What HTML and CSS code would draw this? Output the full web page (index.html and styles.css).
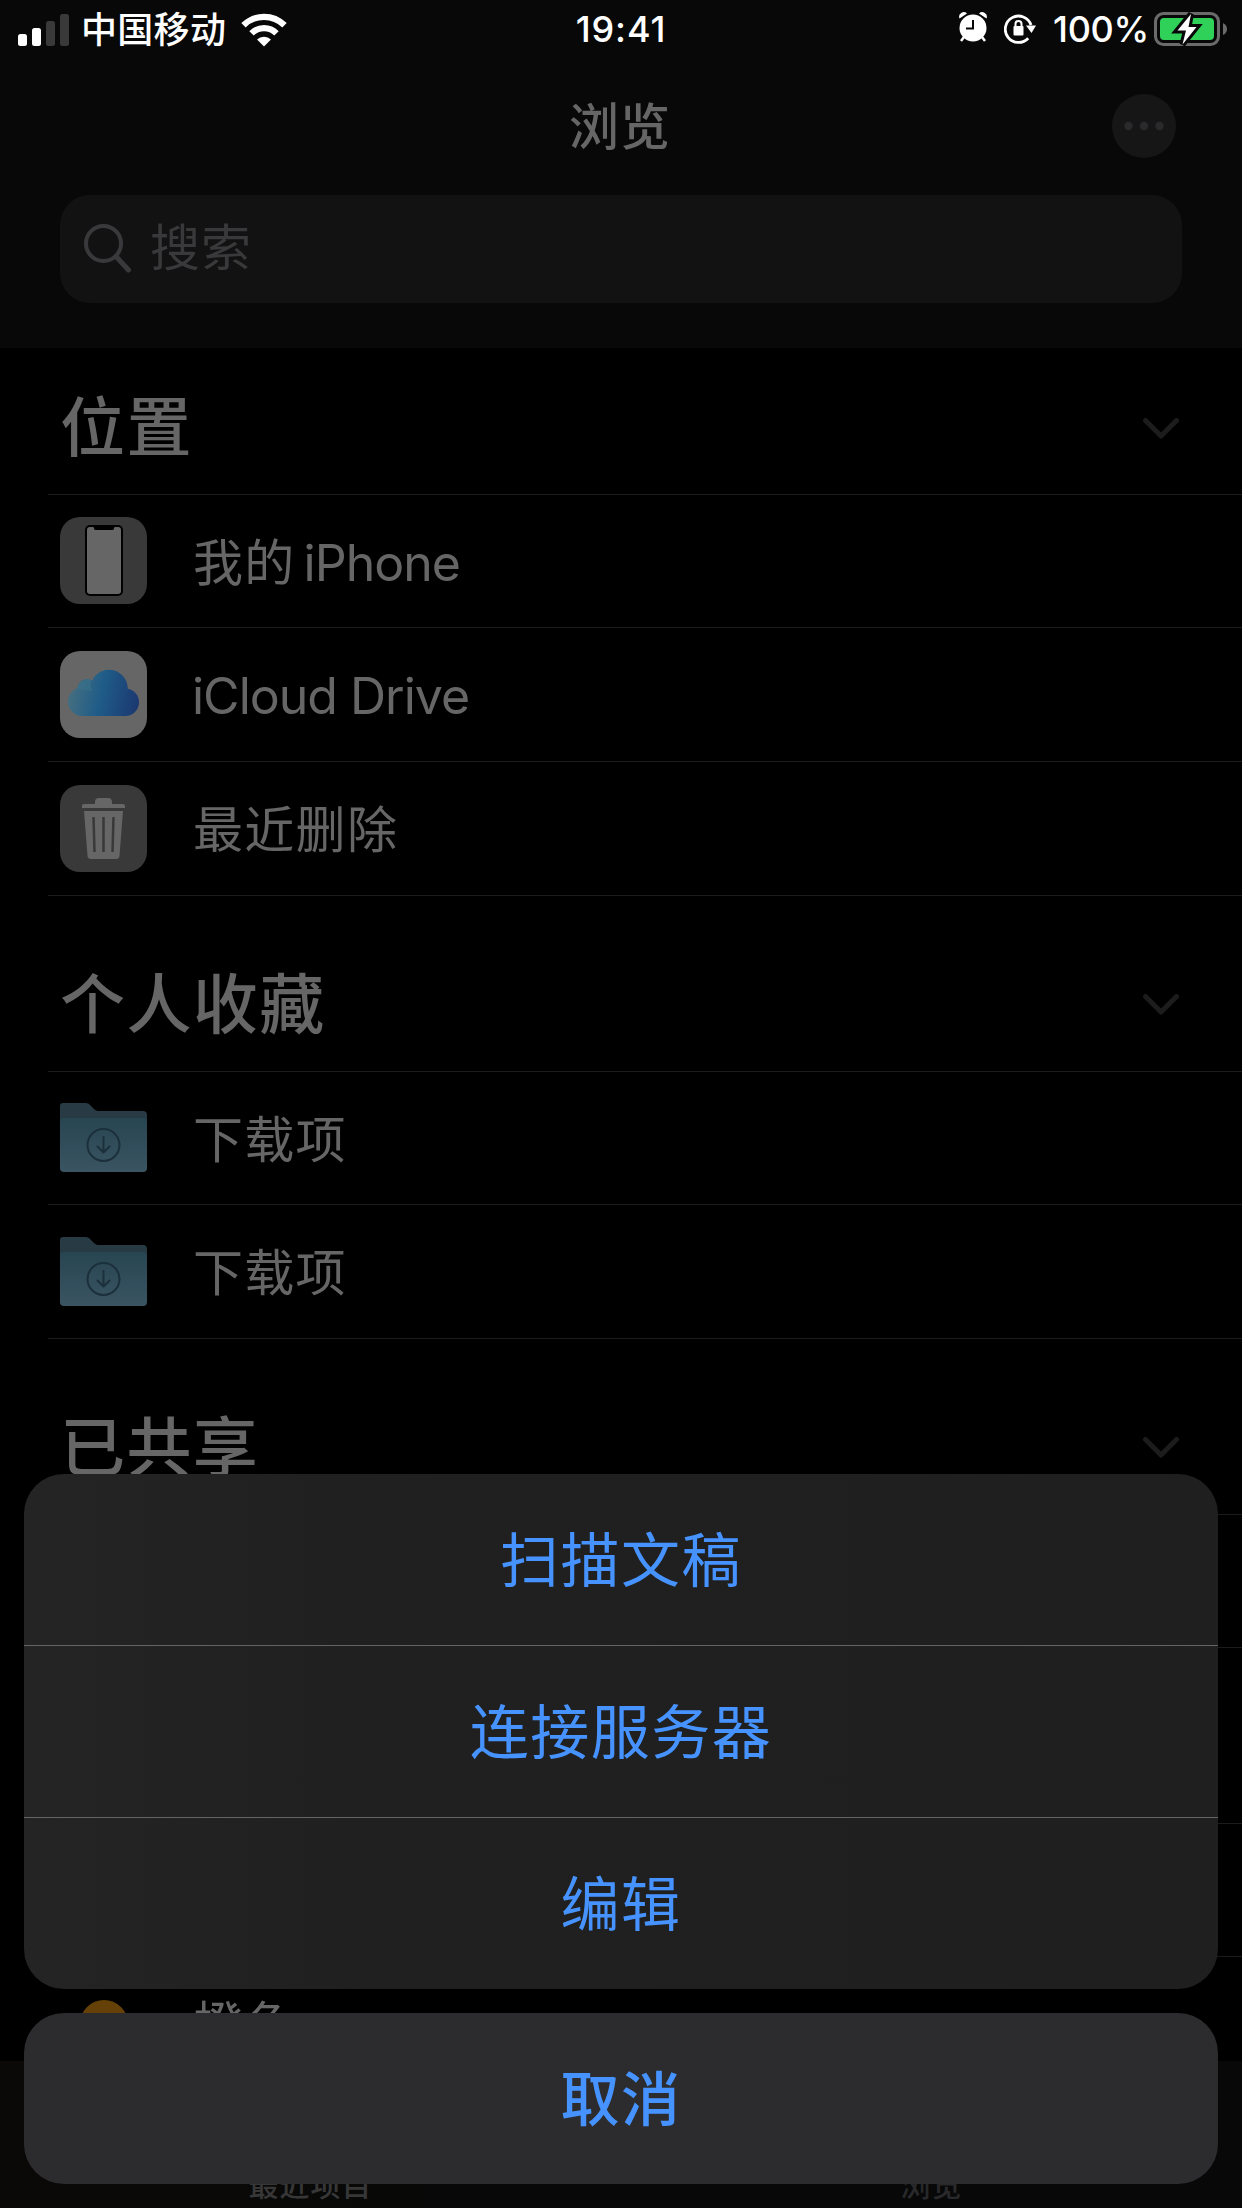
FILE: index.html
```html
<!DOCTYPE html>
<html lang="zh-CN">
<head>
<meta charset="utf-8">
<title>浏览</title>
<link rel="stylesheet" href="styles.css">
</head>
<body>
<svg class="defs" aria-hidden="true">
  <defs>
    <linearGradient id="cloudMain" gradientUnits="userSpaceOnUse" x1="8" y1="42" x2="79" y2="56"><stop offset="0" stop-color="#466f80"/><stop offset="0.45" stop-color="#1f5c88"/><stop offset="1" stop-color="#1b376f"/></linearGradient>
    <linearGradient id="folderFront" x1="0" y1="0" x2="0" y2="1"><stop offset="0" stop-color="#284552"/><stop offset="1" stop-color="#3a5462"/></linearGradient>
    <symbol id="chevron" viewBox="0 0 36 21"><path d="M2.500 2.500 18 18 33.500 2.500" fill="none" stroke="currentColor" stroke-width="5" stroke-linecap="round" stroke-linejoin="round"/></symbol>
    <symbol id="folder" viewBox="0 0 87 69">
      <path d="M0 20V3a3 3 0 0 1 3-3h23q3 0 5 3l3 3q2 2 4 2h45a4 4 0 0 1 4 4V20z" fill="#283a43"/>
      <rect y="15" width="87" height="54" rx="4" fill="url(#folderFront)"/>
      <g fill="none" stroke="#1b303a" stroke-width="2"><circle cx="43.500" cy="42" r="16"/><path d="M43.500 34v15M37.500 43.500l6 6 6-6" stroke-linejoin="round" stroke-linecap="round"/></g>
    </symbol>
  </defs>
</svg>
<div class="screen">
  <header class="top">
    <div class="status">
      <div class="status-left">
        <svg class="signal" viewBox="0 0 51 32" fill="#fff"><rect y="20" width="9" height="12" rx="2.500"/><rect x="14" y="14" width="9" height="18" rx="2.500"/><g fill="#393939"><rect x="28" y="7" width="9" height="25" rx="2.500"/><rect x="42" width="9" height="32" rx="2.500"/></g></svg>
        <span class="carrier">中国移动</span>
        <svg class="wifi" viewBox="0 0 46 34"><g fill="none" stroke="#fff" stroke-width="6.200"><path d="M2.500 12.300a29 29 0 0 1 41 0"/><path d="M10.500 20.300a17.500 17.500 0 0 1 25 0"/></g><path d="M23 33.500 16 26.500a10 10 0 0 1 14 0z" fill="#fff"/></svg>
      </div>
      <span class="time">19:41</span>
      <div class="status-right">
        <svg class="alarm" viewBox="0 0 28 30"><g fill="#fff"><circle cx="14" cy="16" r="13.500"/><path d="M0.500 6.500a4.600 4.600 0 0 1 7.500-5z"/><path d="M27.500 6.500a4.600 4.600 0 0 0-7.500-5z"/></g><path d="M5 25 2 29M23 25l3 4" stroke="#fff" stroke-width="2.500"/><path d="M14 8v8.500H7" fill="none" stroke="#080808" stroke-width="2"/></svg>
        <svg class="lock" viewBox="0 0 32 30"><path d="M24.200 24.200A13.200 13.200 0 1 1 27 11" fill="none" stroke="#fff" stroke-width="2.800"/><path d="M22 11.500h10L27.500 19z" fill="#fff"/><rect x="9.500" y="12" width="10" height="9.500" rx="1" fill="#fff"/><path d="M11.500 12.500V10a3 3 0 0 1 6 0v2.500" fill="none" stroke="#fff" stroke-width="2"/></svg>
        <span class="percent">100%</span>
        <svg class="battery" viewBox="0 0 74 34"><rect x="1.500" y="1.500" width="63" height="31" rx="8" fill="none" stroke="#6b6b6b" stroke-width="3"/><path d="M69 11q4 2 4 6t-4 6z" fill="#6b6b6b"/><rect x="6" y="6" width="54" height="22" rx="4" fill="#30d158"/><path class="bolt" d="M37 2 23.500 18.500h8.500L28.500 32.500 42.500 15H34.500z"/></svg>
      </div>
    </div>
    <div class="nav">
      <h1 class="nav-title">浏览</h1>
      <svg class="more" viewBox="0 0 64 64"><circle cx="32" cy="32" r="32" fill="#161616"/><g fill="#2a2a2c"><circle cx="16.500" cy="32" r="4.200"/><circle cx="32" cy="32" r="4.200"/><circle cx="47.500" cy="32" r="4.200"/></g></svg>
    </div>
    <div class="search">
      <svg class="magnifier" viewBox="0 0 48 49"><circle cx="19.500" cy="19.500" r="17.500" fill="none" stroke="#39393b" stroke-width="4"/><path d="M32 32.500 44.500 46" stroke="#39393b" stroke-width="5" stroke-linecap="round"/></svg>
      <span class="placeholder">搜索</span>
    </div>
  </header>

  <main class="list">
    <div class="section-head first"><h2 class="section-title">位置</h2><svg class="chevron"><use href="#chevron"/></svg></div>
    <div class="row">
      <svg class="icon" viewBox="0 0 87 87"><rect width="87" height="87" rx="20" fill="#393939"/><rect x="25" y="8" width="38" height="71" rx="5" fill="#000"/><path d="M30 10h3q1 0 1 1.500T36 13h16q2 0 2-1.500T55 10h3q3 0 3 3v61q0 3-3 3H30q-3 0-3-3V13q0-3 3-3z" fill="#666"/></svg>
      <span class="label">我的<span class="latin after-cjk">iPhone</span></span>
    </div>
    <div class="row">
      <svg class="icon" viewBox="0 0 87 87"><rect width="87" height="87" rx="20" fill="#666"/><g fill="url(#cloudMain)"><circle cx="27" cy="38" r="10"/><circle cx="22.300" cy="50.700" r="14.300"/><circle cx="65.300" cy="51.300" r="13.700"/><circle cx="49" cy="37.500" r="18.700"/><rect x="22" y="42" width="44" height="23"/></g><path d="M17.500 39a10 10 0 0 1 14-9.800q-2 5 1 10.800z" fill="#3b7389" opacity=".5"/></svg>
      <span class="label latin">iCloud Drive</span>
    </div>
    <div class="row">
      <svg class="icon" viewBox="0 0 87 87"><rect width="87" height="87" rx="20" fill="#393939"/><g fill="#666"><path d="M35 19v-2q0-4 4-4h9q4 0 4 4v2h11q2 0 2 2v2H22v-2q0-2 2-2z"/><path d="M24 26h39l-3.500 45q-.3 3-3.500 3H31q-3.200 0-3.500-3z"/></g><path d="M33.500 32l1 35M43.500 32v35M53.500 32l-1 35" stroke="#393939" stroke-width="2.500"/></svg>
      <span class="label">最近删除</span>
    </div>

    <div class="section-head"><h2 class="section-title">个人收藏</h2><svg class="chevron"><use href="#chevron"/></svg></div>
    <div class="row"><svg class="folder"><use href="#folder"/></svg><span class="label">下载项</span></div>
    <div class="row"><svg class="folder"><use href="#folder"/></svg><span class="label">下载项</span></div>

    <div class="section-head"><h2 class="section-title">已共享</h2><svg class="chevron"><use href="#chevron"/></svg></div>
    <div class="row"></div>
    <div class="section-head"></div>
    <div class="row"></div>
    <div class="row"><span class="tag"></span><span class="label">橙色</span></div>
  </main>

  <nav class="tabs"><span class="tab">最近项目</span><span class="tab dim">浏览</span></nav>

  <div class="sheet">
    <div class="actions">
      <div class="action">扫描文稿</div>
      <div class="action">连接服务器</div>
      <div class="action">编辑</div>
    </div>
    <div class="action cancel">取消</div>
  </div>
</div>
</body>
</html>
```
FILE: styles.css
```css
* { box-sizing: border-box; }
body {
  margin: 0;
  background: #000;
  font-family: Inter, "Noto Sans CJK SC", sans-serif;
}
.defs { position: absolute; width: 0; height: 0; }
.screen {
  position: relative;
  width: 1242px;
  height: 2208px;
  overflow: hidden;
  background: #000;
  color: #666;
}
svg { display: block; flex: none; }

/* Status bar, title and search field */
.top { height: 348px; background: #080808; }
.status {
  display: grid;
  grid-template-columns: 1fr auto 1fr;
  height: 60px;
  align-items: center;
  color: #fff;
  font-size: 36px;
  font-weight: 500;
  line-height: 60px;
}
.status-left { display: flex; padding-left: 18px; align-items: center; }
.signal { width: 51px; height: 32px; }
.carrier { margin: -1px 0 0 12px; width: 147px; white-space: nowrap; letter-spacing: 0.3px; }
.wifi { width: 46px; height: 34px; margin-left: 13px; }
.time { margin-top: -2px; letter-spacing: 0.9px; }
.status-right { display: flex; justify-content: flex-end; align-items: center; padding-right: 14px; }
.alarm { width: 28px; height: 30px; margin-top: -6px; }
.lock { width: 32px; height: 30px; margin: -3px 17px 0 17px; }
.percent { width: 94px; margin: -2px 7px 0 0; white-space: nowrap; letter-spacing: -0.3px; }
.battery { width: 74px; height: 34px; margin-top: -2px; }
.bolt { fill: #fff; stroke: #080808; stroke-width: 6px; paint-order: stroke; }
.nav {
  display: grid;
  grid-template-columns: 1fr auto 1fr;
  height: 135px;
  align-items: center;
  padding: 0 66px;
}
.nav-title { grid-column: 2; margin: -1px 2px 0 0; font-size: 50px; line-height: 70px; font-weight: 500; letter-spacing: 1px; }
.more { width: 64px; height: 64px; justify-self: end; margin-top: -3px; }
.search {
  display: flex;
  align-items: center;
  height: 108px;
  margin: 0 60px;
  padding-left: 24px;
  border-radius: 30px;
  background: #121212;
}
.magnifier { width: 48px; height: 49px; margin-top: -2px; }
.placeholder { margin: -2px 0 0 18px; font-size: 50px; line-height: 70px; color: #39393b; letter-spacing: 1px; }

/* Location list */
.section-head, .row {
  display: flex;
  align-items: center;
  margin-left: 48px;
  padding-left: 12px;
  border-bottom: 1px solid #1b1b1b;
}
.section-head { height: 176px; padding-right: 63px; padding-top: 42px; justify-content: space-between; }
.section-head.first { height: 147px; padding-top: 14px; }
.section-title { margin: 0; font-size: 65px; line-height: 90px; font-weight: 500; letter-spacing: 1.400px; }
.chevron { width: 36px; height: 21px; color: #1c1c1c; }
.row { height: 134px; }
.section-head + .row { height: 133px; }
.section-head + .row svg { margin-top: -1px; }
.icon { width: 87px; height: 87px; }
.folder { width: 87px; height: 69px; }
.label { margin: 3px 0 0 46px; font-size: 50px; line-height: 70px; letter-spacing: 1.300px; white-space: nowrap; }
.label.latin { margin-left: 45px; }
.latin { letter-spacing: -1px; }
.after-cjk { margin-left: 8px; }
.tag { width: 48px; height: 48px; margin: 0 19px 0 20px; border-radius: 50%; background: #664107; }

/* Tab bar */
.tabs {
  position: absolute;
  left: 0;
  right: 0;
  bottom: 0;
  display: flex;
  height: 147px;
  padding-bottom: 2px;
  align-items: flex-end;
  background: linear-gradient(90deg, #0a0907, #080808 40%);
}
.tab { flex: 1; text-align: center; font-size: 30px; line-height: 42px; font-weight: 500; letter-spacing: 1px; color: #373737; }
.tab.dim { color: #29292b; }

/* Action sheet */
.sheet { position: absolute; left: 24px; right: 24px; bottom: 24px; display: flex; flex-direction: column; gap: 24px; }
.actions { border-radius: 40px; overflow: hidden; background: linear-gradient(90deg, #242424, #202020 28%, #1f1f1f); }
.action {
  display: flex;
  height: 171px;
  align-items: center;
  justify-content: center;
  padding-bottom: 6px;
  font-size: 59px;
  letter-spacing: 1.500px;
  color: #4693ff;
}
.actions .action + .action { height: 172px; border-top: 1px solid #646464; }
.cancel { border-radius: 40px; background: #2c2c2e; font-weight: 500; }
```
